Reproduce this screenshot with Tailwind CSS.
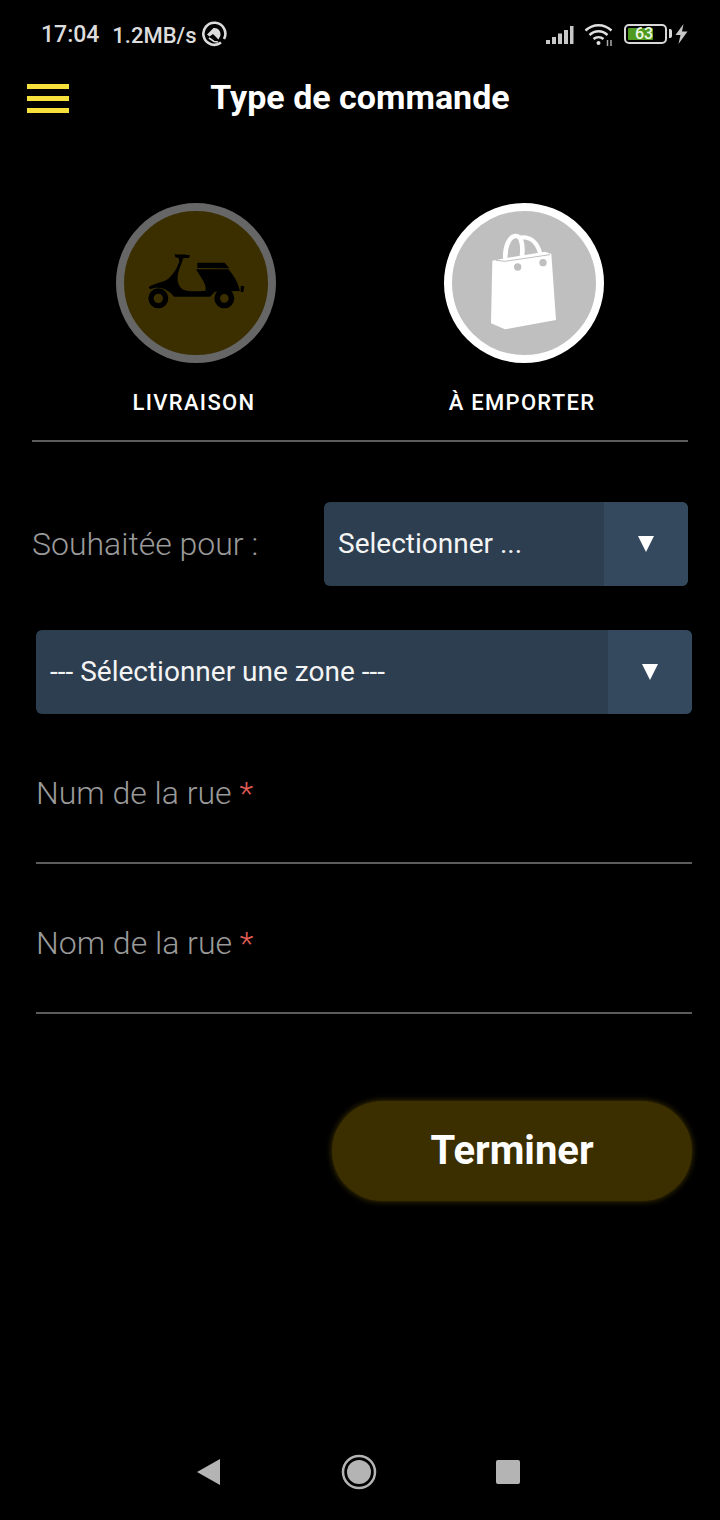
<!DOCTYPE html>
<html lang="fr">
<head>
    <meta charset="UTF-8">
    <meta name="viewport" content="width=device-width, initial-scale=1.0">
    <title>Type de commande</title>
    <script src="https://cdn.jsdelivr.net/npm/@tailwindcss/browser@4"></script>
</head>
<body class="bg-black font-['Roboto',sans-serif] text-white">
    <div class="w-[720px] h-[1520px] flex flex-col overflow-hidden">

        <!-- status bar -->
        <div class="h-[68px] pt-[2px] flex items-center justify-between pl-[41px] pr-[32px] text-[#dcdcdc]">
            <div class="flex items-center font-medium">
                <span class="text-[23px]">17:04</span>
                <span class="ml-[13px] text-[22px]">1.2MB/s</span>
                <svg class="ml-[4px] -mt-[3px]" width="26" height="26" viewBox="0 0 26 26" fill="none">
                    <path d="M20 21.500 A11 11 0 1 1 23 18" stroke="#dcdcdc" stroke-width="2.600"/>
                    <path d="M6 13.500 L12.500 7 C17 6.500 20 10 19.500 14.500 L17.500 18.500 L12 13 L8.500 15.500 Z" fill="#dcdcdc"/>
                    <path d="M8 17 L13 20.500 L17 21" stroke="#dcdcdc" stroke-width="1.600"/>
                </svg>
            </div>
            <div class="flex items-center">
                <svg width="28" height="20" viewBox="0 0 28 20" fill="#c8c8c8">
                    <rect x="0" y="15" width="4" height="4"/>
                    <rect x="6" y="12" width="4" height="7"/>
                    <rect x="12" y="8.500" width="4" height="10.500"/>
                    <rect x="18" y="5" width="4" height="14"/>
                    <rect x="24" y="1" width="3.500" height="18"/>
                </svg>
                <svg class="ml-[10px]" width="32" height="24" viewBox="0 0 32 24" fill="none" stroke="#e0e0e0" stroke-width="2.400">
                    <path d="M1.500 7.500 C9 0.500 20 0.500 27.500 7.500"/>
                    <path d="M5.500 12 C11 7 18 7 23.500 12"/>
                    <path d="M9.500 16 C12.500 13.500 16.500 13.500 19.500 16"/>
                    <circle cx="14.500" cy="20" r="2" fill="#e0e0e0" stroke="none"/>
                    <path d="M23.500 17 V23 M27 17 V23" stroke-width="1.500" stroke="#aaaaaa"/>
                </svg>
                <div class="ml-[8px] w-[43px] h-[20px] -mt-[2px] border-[2.500px] border-[#d8d8d8] rounded-[5px] flex items-center p-[2px] relative">
                    <div class="w-[25px] h-full bg-[#4f9a1f] rounded-[1px] pl-[7px] text-[16px] leading-[11px] font-medium text-[#eef8e4]">63</div>
                    <div class="absolute -right-[7px] top-[3px] w-[3px] h-[9px] bg-[#d8d8d8] rounded-r-[2px]"></div>
                </div>
                <svg class="ml-[8px] -mt-[2px]" width="13" height="20" viewBox="0 0 13 20" fill="#c8c8c8">
                    <path d="M8.500 0 L0.500 11 H5.500 L3.500 20 L12.500 7.500 H7 Z"/>
                </svg>
            </div>
        </div>

        <!-- header -->
        <div class="h-[59px] flex items-center relative">
            <div class="absolute left-[27px] top-[16px] w-[42px] flex flex-col gap-[7px]">
                <div class="h-[5px] bg-[#f7e03c]"></div>
                <div class="h-[5px] bg-[#f7e03c]"></div>
                <div class="h-[5px] bg-[#f7e03c]"></div>
            </div>
            <h1 class="w-full text-center text-[34px] leading-[59px] font-bold">Type de commande</h1>
        </div>

        <!-- order type -->
        <div class="mt-[76px] mx-[32px] h-[239px] border-b-2 border-[#5c5c5c] flex">
            <div class="w-[324px] flex flex-col items-center">
                <div class="ml-[4px] w-[160px] h-[160px] rounded-full border-[8px] border-[#666666] bg-[#3b2f00] flex items-center justify-center">
                    <svg width="100" height="100" viewBox="138 129 300 300" fill="#000000">
                        <path d="M224 192 C236 196 250 190 270 196 L267 204 L250 204 L243 224 C234 245 226 270 240 290 C250 304 270 306 316 302 C322 285 302 262 288 238 L385 238 C398 252 412 272 420 303 L345 305 L330 320 L222 320 C205 296 175 286 150 298 L146 292 C162 278 190 278 205 266 C224 250 232 232 238 214 L236 204 L226 202 Z"/>
                        <path d="M292 218 L374 218 L388 235 L292 234 Z"/>
                        <path d="M422 288 L433 288 L430 306 L422 306 Z"/>
                        <path fill-rule="evenodd" d="M175 295 A30 30 0 1 0 175 355 A30 30 0 1 0 175 295 Z M175 311 A14 14 0 1 1 175 339 A14 14 0 1 1 175 311 Z"/>
                        <path fill-rule="evenodd" d="M373 295 A30 30 0 1 0 373 355 A30 30 0 1 0 373 295 Z M373 312 A13 13 0 1 1 373 338 A13 13 0 1 1 373 312 Z"/>
                    </svg>
                </div>
                <span class="mt-[27px] text-[22px] leading-[26px] font-medium tracking-[1.300px]">LIVRAISON</span>
            </div>
            <div class="w-[332px] flex flex-col items-center">
                <div class="ml-[4px] w-[160px] h-[160px] rounded-full border-[8px] border-white bg-[#bfbfbf] flex items-center justify-center">
                    <svg width="100" height="100" viewBox="132 129 300 300" fill="#ffffff">
                        <path d="M183 400 L187 212 L218 206 L345 185 L364 192 L378 390 L225 418 Z"/>
                        <path d="M226 208 C224 165 240 138 258 138 C274 138 280 165 276 198" fill="none" stroke="#ffffff" stroke-width="14"/>
                        <path d="M266 144 C298 136 322 155 332 195" fill="none" stroke="#ffffff" stroke-width="13"/>
                        <path d="M198 211 L225 214 L360 194" fill="none" stroke="#bfbfbf" stroke-width="3"/>
                        <circle cx="263" cy="231" r="11" fill="#bfbfbf"/>
                        <circle cx="339" cy="218" r="11" fill="#bfbfbf"/>
                    </svg>
                </div>
                <span class="mt-[27px] text-[22px] leading-[26px] font-medium tracking-[1.300px]">À EMPORTER</span>
            </div>
        </div>

        <!-- time -->
        <div class="mt-[60px] ml-[32px] w-[656px] h-[84px] flex items-center justify-between">
            <span class="font-light text-[32px] text-[#9a9a9a]">Souhaitée pour :</span>
            <div class="w-[364px] h-[84px] rounded-[6px] overflow-hidden flex bg-[#2d3e50]">
                <span class="flex-1 pl-[14px] text-[28px] leading-[84px] text-[#f4f4f4]">Selectionner ...</span>
                <div class="w-[84px] bg-[#34495e] flex items-center justify-center">
                    <svg width="18" height="18" viewBox="0 0 18 18" fill="#ffffff"><path d="M1 1 H17 L9 17 Z"/></svg>
                </div>
            </div>
        </div>

        <!-- zone -->
        <div class="mt-[44px] ml-[36px] w-[656px] h-[84px] rounded-[6px] overflow-hidden flex bg-[#2d3e50]">
            <span class="flex-1 pl-[14px] text-[28px] leading-[84px] text-[#f4f4f4]">--- Sélectionner une zone ---</span>
            <div class="w-[84px] bg-[#34495e] flex items-center justify-center">
                <svg width="18" height="18" viewBox="0 0 18 18" fill="#ffffff"><path d="M1 1 H17 L9 17 Z"/></svg>
            </div>
        </div>

        <!-- address -->
        <div class="mt-[48px] ml-[36px] w-[656px] h-[102px] border-b-2 border-[#5c5c5c] font-light text-[32px] leading-[62px] text-[#9a9a9a]">
            Num de la rue <span class="text-[#e35d55]">*</span>
        </div>
        <div class="mt-[48px] ml-[36px] w-[656px] h-[102px] border-b-2 border-[#5c5c5c] font-light text-[32px] leading-[62px] text-[#9a9a9a]">
            Nom de la rue <span class="text-[#e35d55]">*</span>
        </div>

        <!-- submit -->
        <div class="mt-[87px] ml-[332px] w-[360px] h-[100px] rounded-full bg-[#3b2f00] shadow-[0_0_6px_#4a3b00] flex items-center justify-center">
            <span class="text-[40px] font-bold">Terminer</span>
        </div>

        <!-- nav bar -->
        <div class="mt-auto h-[96px] pb-[1px] flex items-center pl-[196px]">
            <svg width="24" height="28" viewBox="0 0 24 28" fill="#b4b4b4"><path d="M24 1 V27 L1 14 Z"/></svg>
            <svg class="ml-[121px]" width="36" height="36" viewBox="0 0 36 36" fill="#b4b4b4">
                <circle cx="18" cy="18" r="16" fill="none" stroke="#b4b4b4" stroke-width="2.500"/>
                <circle cx="18" cy="18" r="12"/>
            </svg>
            <div class="ml-[119px] w-[24px] h-[24px] rounded-[2px] bg-[#b4b4b4]"></div>
        </div>
    </div>
</body>
</html>
